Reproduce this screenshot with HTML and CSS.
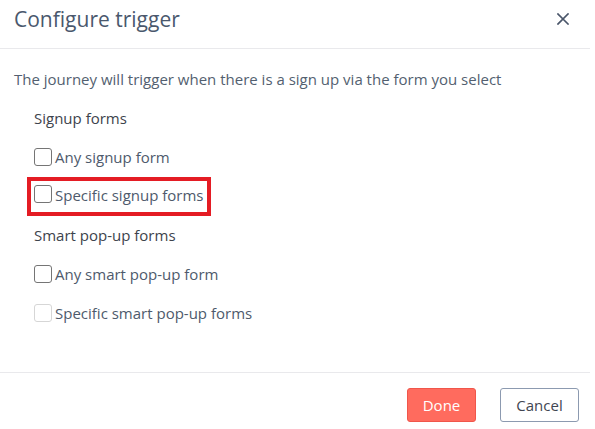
FILE: index.html
```html
<!DOCTYPE html>
<html lang="en">
<head>
<meta charset="utf-8">
<title>Configure trigger</title>
<link rel="stylesheet" href="styles.css">
</head>
<body>
<div class="dialog">
  <header class="dialog-header">
    <h1 class="dialog-title">Configure trigger</h1>
    <button class="close-btn" aria-label="Close">
      <svg width="12" height="12" viewBox="0 0 12 12"><path d="M1 1 L11 11 M11 1 L1 11" stroke="#4a566a" stroke-width="1.7" fill="none" stroke-linecap="square"/></svg>
    </button>
  </header>
  <section class="dialog-body">
    <p class="row description">The journey will trigger when there is a sign up via the form you select</p>
    <div class="row group-label">Signup forms</div>
    <label class="row option"><span class="checkbox"></span><span class="option-text">Any signup form</span></label>
    <label class="row option highlighted"><span class="checkbox"></span><span class="option-text">Specific signup forms</span></label>
    <div class="row group-label">Smart pop-up forms</div>
    <label class="row option"><span class="checkbox"></span><span class="option-text">Any smart pop-up form</span></label>
    <label class="row option disabled"><span class="checkbox"></span><span class="option-text">Specific smart pop-up forms</span></label>
  </section>
  <footer class="dialog-footer">
    <button class="btn btn-primary">Done</button>
    <button class="btn btn-secondary">Cancel</button>
  </footer>
</div>
</body>
</html>
```
FILE: styles.css
```css
* { box-sizing: border-box; }
html, body {
  margin: 0;
  padding: 0;
  background: #ffffff;
}
body {
  font-family: "Open Sans", "Liberation Sans", sans-serif;
  width: 595px;
  height: 429px;
  overflow: hidden;
}
.dialog {
  width: 590px;
  display: flex;
  flex-direction: column;
}
.dialog-header {
  height: 49px;
  border-bottom: 1px solid #e9e9ec;
  display: flex;
  justify-content: space-between;
  align-items: flex-start;
  padding: 5px 21px 0 14px;
}
.dialog-title {
  margin: 0;
  font-size: 21px;
  line-height: 28px;
  font-weight: 400;
  color: #4a586d;
}
.close-btn {
  margin-top: 8px;
  padding: 0;
  border: 0;
  background: none;
  width: 12px;
  height: 12px;
  display: flex;
}
.dialog-body {
  padding: 10px 0 40px 0;
  display: flex;
  flex-direction: column;
  align-items: flex-start;
}
.row {
  height: 39px;
  margin: 0;
  display: flex;
  align-items: center;
  font-size: 15px;
}
.description {
  padding-left: 14px;
  color: #535f70;
}
.group-label {
  padding-left: 34px;
  color: #3d434c;
}
.option {
  padding-left: 34px;
  color: #4e5a6c;
  gap: 3px;
}
.checkbox {
  width: 18px;
  height: 18px;
  border: 1px solid #757575;
  border-radius: 3px;
  background: #fff;
  flex: none;
}
.option.disabled .checkbox {
  border-color: #d6d6d6;
}
.option.highlighted {
  margin-left: 27px;
  margin-top: 1px;
  margin-bottom: -1px;
  padding: 4px 3px 0 3px;
  align-items: flex-start;
  border: 4px solid #e41c24;
}
.dialog-footer {
  border-top: 1px solid #e9e9ec;
  padding: 15px 11px 0 0;
  display: flex;
  justify-content: flex-end;
  gap: 24px;
}
.btn {
  height: 34px;
  font-family: "Open Sans", "Liberation Sans", sans-serif;
  font-size: 15px;
  border-radius: 3px;
  padding: 0;
  display: flex;
  align-items: center;
  justify-content: center;
}
.btn-primary {
  width: 69px;
  background: #ff6b5e;
  border: 1px solid #f0564b;
  color: #ffffff;
}
.btn-secondary {
  width: 79px;
  background: #ffffff;
  border: 1px solid #8c9ab0;
  color: #3f4651;
}
```
